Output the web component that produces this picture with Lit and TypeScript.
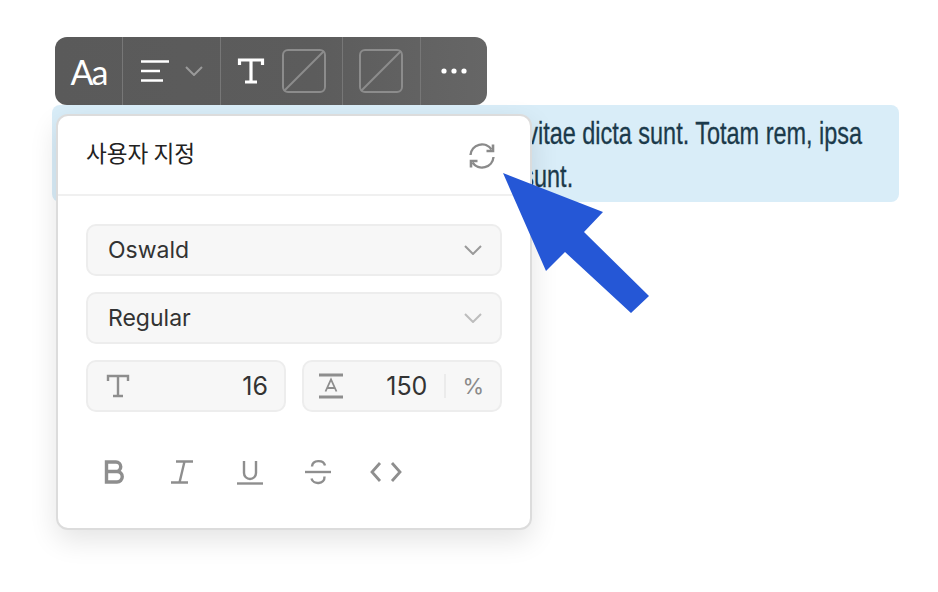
import { LitElement, html, css } from "lit";
import { customElement } from "lit/decorators.js";

const chevron = html`<svg width="18" height="10" viewBox="0 0 18 10"><path d="M1 1l8 8 8-8" fill="none" stroke="currentColor" stroke-width="2"/></svg>`;

const slash = html`<svg width="44" height="44" viewBox="0 0 44 44" fill="none" stroke="#8c8c8c" stroke-width="2"><rect x="1" y="1" width="42" height="42" rx="5"/><path d="M2 42L42 2"/></svg>`;

@customElement("app-root")
export class AppRoot extends LitElement {
    render() {
        return html`
            <div class="toolbar">
                <div class="seg seg_font">Aa</div>
                <div class="seg seg_align">
                    <svg width="30" height="24" viewBox="0 0 30 24" fill="none" stroke="#fff" stroke-width="2.4">
                        <path d="M1 2.5h28M1 12h19M1 21.500h22" />
                    </svg>
                    <span class="tb_chevron">${chevron}</span>
                </div>
                <div class="seg seg_color">
                    <svg width="28" height="28" viewBox="0 0 28 28" fill="none" stroke="#fff" stroke-width="3.200">
                        <path d="M2.500 8V3h23v5M14 3v22M8 25h12" />
                    </svg>
                    ${slash}
                </div>
                <div class="seg seg_fill">${slash}</div>
                <div class="seg">
                    <svg width="26" height="6" viewBox="0 0 26 6" fill="#fff">
                        <circle cx="3" cy="3" r="2.600" /><circle cx="13" cy="3" r="2.600" /><circle cx="23" cy="3" r="2.600" />
                    </svg>
                </div>
            </div>
            <div class="banner">
                <div class="line line_first">Lorem ipsum vitae dicta sunt. Totam rem, ipsa</div>
                <div class="line line_second">Nemo enim quas sunt.</div>
            </div>
            <div class="panel">
                <div class="panel_head">
                    <span class="panel_title">사용자 지정</span>
                    <svg class="refresh" width="28" height="28" viewBox="0 0 28 28" fill="none" stroke="#8a8a8a" stroke-width="2.400">
                        <path d="M2.500 13a11.500 11.500 0 0 1 21-5.500" />
                        <path d="M25.500 15a11.500 11.500 0 0 1-21 5.500" />
                        <path d="M25 2.500v6.500h-6.500" stroke-width="2.600" />
                        <path d="M3 25.500v-6.500h6.500" stroke-width="2.600" />
                    </svg>
                </div>
                <div class="panel_body">
                    <div class="field select"><span>Oswald</span><span class="sel_chevron">${chevron}</span></div>
                    <div class="field select"><span>Regular</span><span class="sel_chevron light">${chevron}</span></div>
                    <div class="num_row">
                        <div class="field num">
                            <svg width="24" height="24" viewBox="0 0 24 24" fill="none" stroke="#8e8e8e" stroke-width="2.400">
                                <path d="M2 7V2h20v5M12 2v20M7 22h10" />
                            </svg>
                            <span class="num_value">16</span>
                        </div>
                        <div class="field num num_line">
                            <svg width="26" height="26" viewBox="0 0 26 26" fill="none" stroke="#8e8e8e">
                                <path d="M1 2h24M1 24h24" stroke-width="3" />
                                <path d="M7.500 18.500L13 6.500l5.500 12M9.500 15h7" stroke-width="1.800" />
                            </svg>
                            <span class="num_value num_pct">150</span>
                            <span class="pct">%</span>
                        </div>
                    </div>
                    <div class="marks">
                        <svg width="28" height="28" viewBox="0 0 28 28" fill="none" stroke="#8e8e8e" stroke-width="3.400">
                            <path d="M6.500 13.500h9.500a4.500 4.500 0 0 0 0-9.500H6.500v20h10.500a5.200 5.200 0 0 0 0-10.500" />
                        </svg>
                        <svg width="28" height="28" viewBox="0 0 28 28" fill="none" stroke="#8e8e8e" stroke-width="2.400">
                            <path d="M8 3.500h17M3 24.500h17M16.500 3.500l-5 21" />
                        </svg>
                        <svg width="28" height="28" viewBox="0 0 28 28" fill="none" stroke="#8e8e8e" stroke-width="2.400">
                            <path d="M8 3v12a6 6 0 0 0 12 0V3" />
                            <path d="M1 25.500h26" />
                        </svg>
                        <svg width="28" height="28" viewBox="0 0 28 28" fill="none" stroke="#8e8e8e" stroke-width="2.400">
                            <path d="M21 7.500C19.500 1.500 8.500 1.500 8 8.500" />
                            <path d="M1 14h26" />
                            <path d="M20.500 18.500C21 26.500 9 27 7.500 20.500" />
                        </svg>
                        <svg class="code" width="32" height="24" viewBox="0 0 32 24" fill="none" stroke="#8e8e8e" stroke-width="2.800">
                            <path d="M10 3L2 12l8 9M22 3l8 9-8 9" />
                        </svg>
                    </div>
                </div>
            </div>
            <svg class="arrow" width="150" height="144" viewBox="0 0 150 144">
                <path fill="#2557d6" d="M3 3L103 42 84 62 149 126 131 143 65 82 46 101Z" />
            </svg>
        `;
    }
    static styles = css`
        :host {
            display: block;
            position: relative;
            width: 938px;
            height: 592px;
            padding-top: 37px;
            box-sizing: border-box;
            overflow: hidden;
            background: #fff;
            font-family: Inter, "Noto Sans CJK KR", sans-serif;
        }
        .toolbar {
            display: grid;
            grid-template-columns: 67px 98px 122px 78px 67px;
            width: 432px;
            height: 68px;
            margin-left: 55px;
            border-radius: 12px;
            overflow: hidden;
            background: linear-gradient(90deg, #5a5a5a, #5c5c5c 60%, #666);
        }
        .seg {
            display: flex;
            align-items: center;
            justify-content: center;
            border-left: 1px solid #777;
        }
        .seg:first-child {
            border-left: none;
        }
        .seg_font {
            color: #fff;
            font-size: 34px;
            letter-spacing: -2px;
            font-family: Lato, sans-serif;
        }
        .seg_align {
            gap: 15px;
        }
        .seg_color {
            gap: 17px;
        }
        .seg_fill {
            padding-right: 2px;
        }
        .tb_chevron {
            display: flex;
            color: #9a9a9a;
        }
        .banner {
            width: 847px;
            height: 97px;
            margin-left: 52px;
            box-sizing: border-box;
            padding-top: 7px;
            border-radius: 8px;
            background: #d9edf8;
            color: #1b3a4b;
            font-family: "Liberation Sans", sans-serif;
            font-size: 32px;
            line-height: 43px;
            -webkit-text-stroke: 0.3px #1b3a4b;
        }
        /* no Oswald here: squeeze the sans down to its width */
        .line {
            width: max-content;
            margin-left: auto;
            white-space: nowrap;
            transform: scaleX(0.733);
            transform-origin: right center;
        }
        .line_first {
            margin-right: 37px;
        }
        .line_second {
            margin-right: 326px;
        }
        .panel {
            position: absolute;
            left: 56px;
            top: 114px;
            width: 476px;
            height: 416px;
            box-sizing: border-box;
            border: 2px solid #dcdcdc;
            border-radius: 12px;
            background: #fff;
            box-shadow: 0 10px 28px rgba(0, 0, 0, 0.11);
        }
        .panel_head {
            display: flex;
            align-items: center;
            justify-content: space-between;
            height: 78px;
            padding: 0 34px 0 28px;
            border-bottom: 2px solid #f0f0f0;
        }
        .panel_title {
            font-family: "Noto Sans CJK KR", sans-serif;
            font-size: 22.600px;
            color: #222;
            padding-bottom: 6px;
        }
        .refresh {
            margin-top: 1px;
        }
        .panel_body {
            display: flex;
            flex-direction: column;
            gap: 16px;
            padding: 28px 28px 0 28px;
        }
        .field {
            display: flex;
            align-items: center;
            height: 52px;
            box-sizing: border-box;
            border: 2px solid #ededed;
            border-radius: 10px;
            background: #f7f7f7;
            color: #333;
            font-size: 23px;
        }
        .select {
            justify-content: space-between;
            padding: 0 18px 0 20px;
        }
        .sel_chevron {
            display: flex;
            color: #9a9a9a;
        }
        .sel_chevron.light {
            color: #bdbdbd;
        }
        .num_row {
            display: grid;
            grid-template-columns: 200px 200px;
            gap: 16px;
        }
        .num {
            padding: 0 16px 0 18px;
        }
        .num_line {
            padding-left: 14px;
        }
        .num_value {
            margin-left: auto;
            font-size: 25px;
        }
        .num_pct {
            padding-right: 17px;
            border-right: 2px solid #ebebeb;
            line-height: 24px;
        }
        .pct {
            color: #8a8a8a;
            font-size: 22px;
            margin-left: 16px;
        }
        .marks {
            display: flex;
            align-items: center;
            gap: 40px;
            margin-top: 30px;
            padding-left: 14px;
        }
        .code {
            margin-left: -2px;
        }
        .arrow {
            position: absolute;
            left: 500px;
            top: 170px;
        }
    `;
}
